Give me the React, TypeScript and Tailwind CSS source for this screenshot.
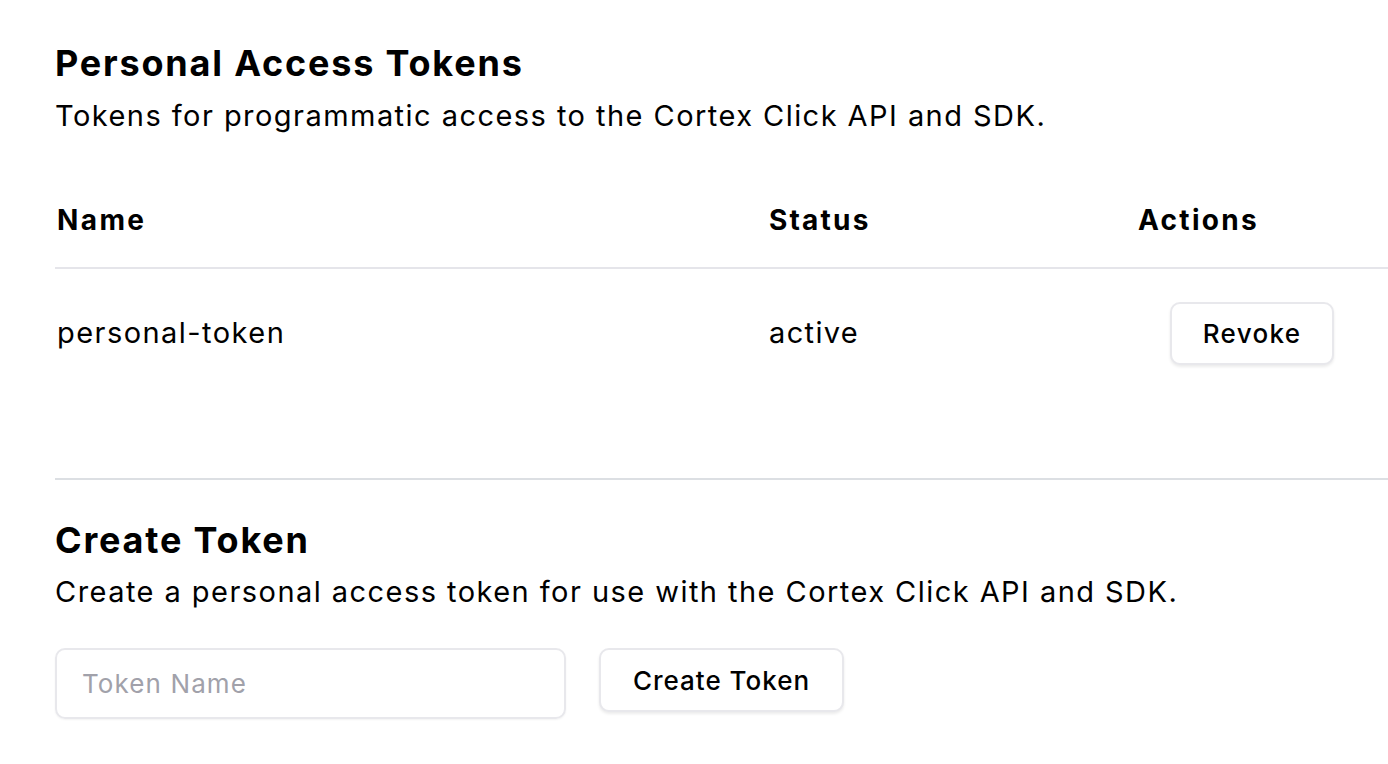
import React from "react";

export default function App() {
  return (
    <div className="w-[1388px] h-[764px] overflow-hidden bg-white text-black font-['Inter','Noto_Sans',sans-serif]">
      <div className="pl-[55px] pt-[39px] w-[1500px]">
        <h1 className="text-[36px] leading-[48px] font-bold tracking-[1.8px]">Personal Access Tokens</h1>
        <p className="text-[29px] leading-[40px] mt-[9px] tracking-[1.45px]">
          Tokens for programmatic access to the Cortex Click API and SDK.
        </p>

        <div className="mt-[36px] w-[1400px]">
          <div className="flex items-center h-[97px] border-b-2 border-[#e5e5ea]">
            <div className="w-[714px] pl-[2px] text-[28px] font-bold tracking-[2.4px]">Name</div>
            <div className="w-[369px] text-[28px] font-bold tracking-[2.2px]">Status</div>
            <div className="text-[28px] font-bold tracking-[2.3px]">Actions</div>
          </div>
          <div className="flex items-center h-[128px]">
            <div className="w-[714px] pl-[2px] text-[29px] tracking-[1.45px]">personal-token</div>
            <div className="w-[401px] text-[29px] tracking-[1.35px]">active</div>
            <button className="w-[164px] h-[63px] rounded-[10px] border-2 border-[#e8e8ec] bg-white shadow-[0_2px_3px_rgba(0,0,0,0.08)] text-[26px] font-medium tracking-[1.3px]">
              Revoke
            </button>
          </div>
        </div>

        <div className="mt-[81px] w-[1400px] border-t-2 border-[#dcdfe3]"></div>

        <h2 className="mt-[36px] text-[36px] leading-[48px] font-bold tracking-[1.8px]">Create Token</h2>
        <p className="text-[29px] leading-[40px] mt-[8px] tracking-[1.45px]">
          Create a personal access token for use with the Cortex Click API and SDK.
        </p>

        <div className="mt-[36px] flex items-start gap-[33px]">
          <input
            className="w-[511px] h-[71px] rounded-[10px] border-2 border-[#e8e8ec] px-[25px] text-[26px] tracking-[1.1px] outline-none placeholder:text-[#a1a1aa] shadow-[0_1px_2px_rgba(0,0,0,0.05)]"
            placeholder="Token Name"
          />
          <button className="w-[245px] h-[64px] rounded-[10px] border-2 border-[#e8e8ec] bg-white shadow-[0_2px_3px_rgba(0,0,0,0.08)] text-[26px] font-medium tracking-[1px]">
            Create Token
          </button>
        </div>
      </div>
    </div>
  );
}
